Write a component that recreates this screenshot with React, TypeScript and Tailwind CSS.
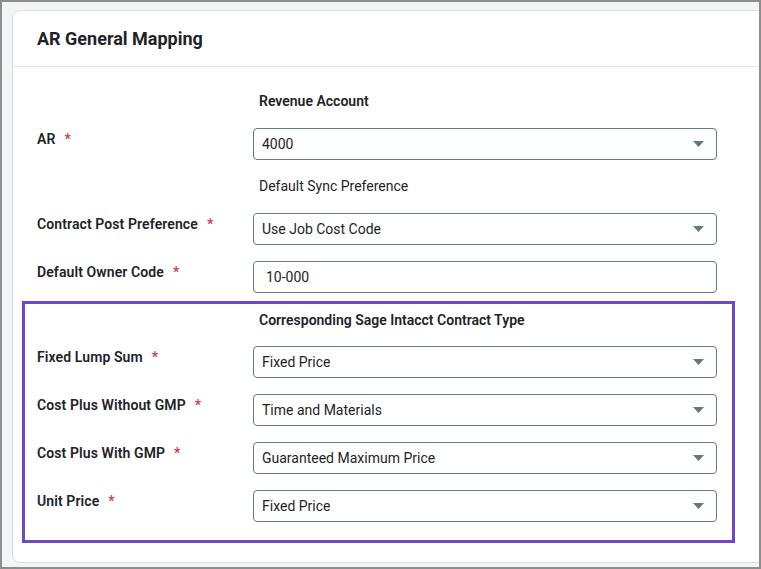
import React from "react";

const Caret = () => (
  <svg width="11" height="6" viewBox="0 0 11 6" className="shrink-0">
    <path d="M0 0 L11 0 L5.5 6 Z" fill="#5f7b89" />
  </svg>
);

const Select = ({ value }: { value: string }) => (
  <div className="flex h-[32px] w-[464px] items-center justify-between rounded-[4px] border border-[#627d8a] bg-white pl-[8px] pr-[12px] text-[14px] text-[#1e2328]">
    <span>{value}</span>
    <Caret />
  </div>
);

const TextInput = ({ value }: { value: string }) => (
  <div className="flex h-[32px] w-[464px] items-center rounded-[4px] border border-[#627d8a] bg-white pl-[12px] text-[14px] text-[#1e2328]">
    <span>{value}</span>
  </div>
);

const Label = ({ text }: { text: string }) => (
  <div className="flex w-[216px] shrink-0 items-center pt-[1px] text-[14px] font-semibold leading-[20px] tracking-[0.1px] text-[#1e2328]">
    <span>{text}</span>
    <span className="ml-[9px] text-[#d23a55]">*</span>
  </div>
);

const Row = ({ label, children }: { label: string; children: React.ReactNode }) => (
  <div className="flex items-start">
    <Label text={label} />
    {children}
  </div>
);

const Heading = ({ text, bold = true }: { text: string; bold?: boolean }) => (
  <div className="flex">
    <div className="w-[216px] shrink-0" />
    <div className={`pl-[6px] text-[14px] leading-[20px] text-[#1e2328] ${bold ? "font-semibold" : "font-normal"}`}>
      {text}
    </div>
  </div>
);

export default function App() {
  return (
    <div
      className="h-[569px] w-[761px] overflow-hidden border-2 border-[#8e8e8e] bg-[#f2f5f6] pl-[10px] pt-[8px]"
      style={{ fontFamily: "Roboto, 'Liberation Sans', sans-serif" }}
    >
      <div className="h-[553px] w-[780px] rounded-[8px] border border-[#d6dee1] bg-white">
        <div className="flex h-[56px] items-center border-b border-[#e2e8ea] px-[24px]">
          <h1 className="text-[18px] font-bold text-[#1e2328]">AR General Mapping</h1>
        </div>
        <div className="pl-[9px] pt-[24px]">
          <div className="pl-[15px]">
            <Heading text="Revenue Account" />
            <div className="mt-[17px]">
              <Row label="AR">
                <Select value="4000" />
              </Row>
            </div>
            <div className="mt-[16px]">
              <Heading text="Default Sync Preference" bold={false} />
            </div>
            <div className="mt-[17px] flex flex-col gap-[16px]">
              <Row label="Contract Post Preference">
                <Select value="Use Job Cost Code" />
              </Row>
              <Row label="Default Owner Code">
                <TextInput value="10-000" />
              </Row>
            </div>
          </div>
          <div className="mt-[8px] w-[713px] border-[3px] border-[#7048c4] pb-[18px] pl-[12px] pt-[6px]">
            <Heading text="Corresponding Sage Intacct Contract Type" />
            <div className="mt-[16px] flex flex-col gap-[16px]">
              <Row label="Fixed Lump Sum">
                <Select value="Fixed Price" />
              </Row>
              <Row label="Cost Plus Without GMP">
                <Select value="Time and Materials" />
              </Row>
              <Row label="Cost Plus With GMP">
                <Select value="Guaranteed Maximum Price" />
              </Row>
              <Row label="Unit Price">
                <Select value="Fixed Price" />
              </Row>
            </div>
          </div>
        </div>
      </div>
    </div>
  );
}
